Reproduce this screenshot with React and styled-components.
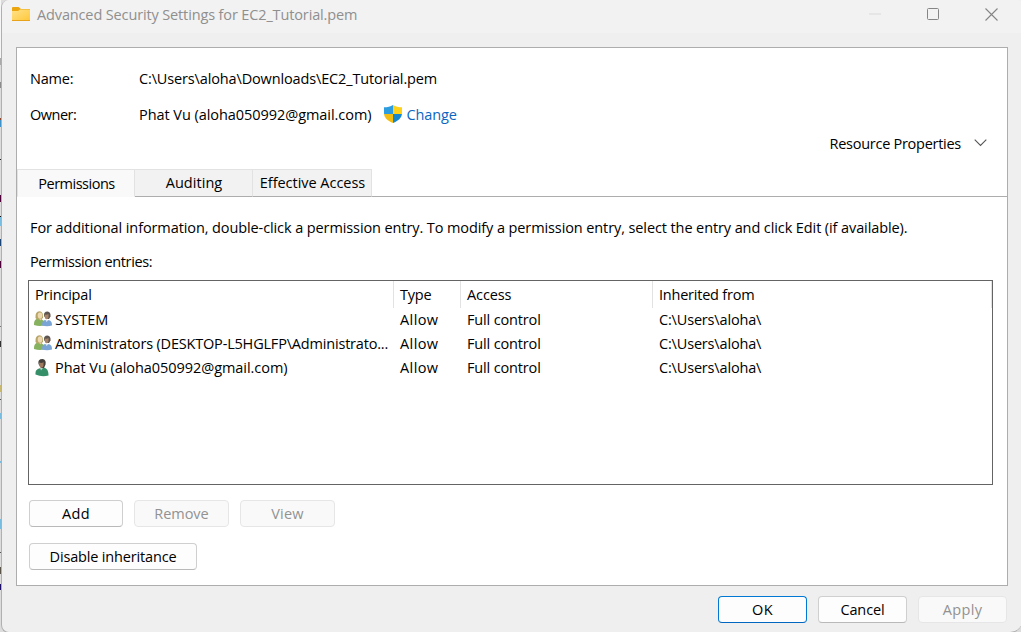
import React from "react";
import styled, { createGlobalStyle, css } from "styled-components";

const GlobalStyle = createGlobalStyle`
  * { box-sizing: border-box; }
  body {
    margin: 0;
    background: #d9d9d9;
    color: #000;
    font: 14.5px/20px "Open Sans", "Noto Sans", sans-serif;
  }
`;

const Desktop = styled.div`
  position: relative;
  height: 632px;
  overflow: hidden;
  background: #dcdcdc;
`;

const Sliver = styled.i`
  position: absolute;
  left: 0;
  width: ${(p) => p.$w || 1}px;
  top: ${(p) => p.$top}px;
  height: ${(p) => p.$h}px;
  background: ${(p) => p.$color};
`;

const Window = styled.div`
  position: relative;
  display: flex;
  flex-direction: column;
  width: 1021px;
  height: 633px;
  margin-left: 1px;
  border: 1px solid #b0b0b0;
  border-top: 0;
  border-right: 0;
  border-radius: 8px 3px 12px 8px;
  background: #efefef;
  overflow: hidden;
`;

const TitleBar = styled.header`
  display: flex;
  align-items: center;
  flex: none;
  height: 33px;
  padding: 0 24px 5px 10px;
  background: #f2f2f2;
  color: #8f8f8f;
`;

const Title = styled.span`
  margin-left: 6px;
  padding-top: 1px;
  flex: 1;
`;

const WindowControls = styled.div`
  display: flex;
  align-items: center;
  gap: 46px;
`;

const Label = styled.span`
  white-space: pre;
  letter-spacing: ${(p) => p.$ls || 0}px;
`;

const Panel = styled.main`
  display: flex;
  flex-direction: column;
  flex: none;
  width: 992px;
  height: 539px;
  margin: 14px 0 0 14px;
  border: 1px solid #adadad;
  background: #fff;
`;

const Details = styled.div`
  display: grid;
  grid-template-columns: 109px 1fr;
  row-gap: 16px;
  padding: 21px 0 0 13px;
`;

const OwnerCell = styled.div`
  display: flex;
  align-items: center;
`;

const ChangeLink = styled.a`
  display: flex;
  align-items: center;
  gap: 4px;
  margin-left: 13px;
  color: #0b66c3;
`;

const ResourceRow = styled.div`
  display: flex;
  justify-content: flex-end;
  align-items: center;
  gap: 13px;
  height: 20px;
  margin-top: 9px;
  padding-right: 20px;
`;

const Tabs = styled.nav`
  display: flex;
  height: 28px;
  margin-top: 15px;
`;

const Tab = styled.div`
  display: flex;
  justify-content: center;
  width: ${(p) => p.$w}px;
  padding: 3px 0 0 1px;
  border: 1px solid #e2e2e2;
  border-bottom-color: #adadad;
  border-left-width: 0;
  background: #f2f2f2;
  ${(p) =>
    p.$active &&
    css`
      padding-top: 4px;
      border-left-width: 1px;
      border-bottom-color: #f9f9f9;
      background: #f9f9f9;
    `}
`;

const TabRule = styled.div`
  flex: 1;
  border-bottom: 1px solid #adadad;
`;

const Note = styled.p`
  margin: ${(p) => p.$top}px 0 0 13px;
`;

const List = styled.section`
  flex: none;
  width: 965px;
  height: 205px;
  margin: 8px 0 0 11px;
  border: 1px solid #646464;
`;

const Row = styled.div`
  display: grid;
  grid-template-columns: 365px 67px 192px 339px;
  height: 24px;
  line-height: 24px;
`;

const HeaderRow = styled(Row)`
  height: 26px;
  line-height: 27px;
  margin-bottom: 1px;
`;

const Cell = styled.div`
  display: flex;
  align-items: center;
  padding-left: 6px;
`;

const HeaderCell = styled(Cell)`
  border-right: 1px solid #e2e2e2;
`;

const PrincipalCell = styled(Cell)`
  gap: 3px;
  padding-left: 5px;
`;

const ButtonRow = styled.div`
  display: flex;
  gap: 11px;
  margin: ${(p) => p.$top}px 0 0 12px;
`;

const Footer = styled.footer`
  display: flex;
  justify-content: flex-end;
  gap: 11px;
  padding: 10px 15px 0 0;
`;

const Button = styled.button`
  display: flex;
  align-items: center;
  justify-content: center;
  flex: none;
  width: ${(p) => p.$w}px;
  height: 27px;
  padding: 1px 0 0;
  border: 1px solid ${(p) => (p.$primary ? "#0078d4" : "#cfcfcf")};
  border-bottom-color: ${(p) => (p.$primary ? "#0067c0" : "#b9b9b9")};
  border-radius: 4px;
  background: #fdfdfd;
  color: #000;
  font: inherit;
  &:disabled {
    border-color: #e6e6e6;
    background: #f9f9f9;
    color: #929292;
  }
`;

const Icon = styled.svg`
  display: block;
  flex: none;
`;

const FolderIcon = () => (
  <Icon width="19" height="16" viewBox="0 0 19 16">
    <defs>
      <linearGradient id="folder" x2="1" y2="1">
        <stop stopColor="#ffe28a" />
        <stop offset="1" stopColor="#ffc83a" />
      </linearGradient>
    </defs>
    <path d="M0 2q0-1 1-1h5.5L9 3h9v11H0z" fill="#eba50f" />
    <path d="M0 5h6l2-1.500h10V14.500H0z" fill="url(#folder)" />
    <path d="M0 14h18v1H0z" fill="#e9a31a" />
  </Icon>
);

const ShieldIcon = () => (
  <Icon width="18" height="20" viewBox="0 0 18 20">
    <defs>
      <clipPath id="shield">
        <path d="M9 0C6.500 1.600 3.500 2.300 0 2.300V8c0 5 4 8 9 10 5-2 9-5 9-10V2.300C14.500 2.300 11.500 1.600 9 0z" />
      </clipPath>
    </defs>
    <g clipPath="url(#shield)">
      <path d="M0 0h9v9H0z" fill="#2d9de0" />
      <path d="M9 0h9v9H9z" fill="#ffd21a" />
      <path d="M0 9h9v9H0z" fill="#f4bd12" />
      <path d="M9 9h9v9H9z" fill="#1687cf" />
    </g>
  </Icon>
);

const GroupIcon = () => (
  <Icon width="18" height="18" viewBox="0 0 18 18">
    <path d="M0 14c0-4 1-6 4-6.500h3l3 3v4q-5 1-10-.5z" fill="#86b15e" />
    <path d="M1.500 7Q1 .5 5.500.3 9.500.5 9 7l-2 1.500H3z" fill="#b9a566" />
    <ellipse cx="6" cy="4.500" rx="2.300" ry="3" fill="#ecd9b4" />
    <path d="M4.500 7.500h3L7 9.500z" fill="#e5cfa5" />
    <path d="M8 14.500c0-4 1-5 3-5.500h3c3 .5 4 2 4 5.500q-5 1.500-10 0z" fill="#7ba4d6" />
    <path d="M10 5Q9.500.5 13.500.5 17 1 16.500 5.500L15 8h-3z" fill="#5d5650" />
    <path d="M10.500 3.500Q13 4 14.500 3v3.500Q13.500 8.700 12 8.300 10.500 7 10.500 3.500z" fill="#a98468" />
    <path d="M11.500 9h3L12.500 11z" fill="#d9e7f5" />
  </Icon>
);

const PersonIcon = () => (
  <Icon width="18" height="18" viewBox="0 0 18 18">
    <path d="M1.500 15.500Q1 10.500 5 9.500L9 8.500c4 .5 5.500 3 5.500 8Q8 18.500 1.500 15.500z" fill="#35906a" />
    <path d="M4.500 5Q3.500 0 8.500 0 12.500.5 11.500 5.500L10 9H7z" fill="#45403b" />
    <path d="M5 3.500Q8 4.500 9.500 3v4Q8.500 9.500 6.500 8.500 5 7 5 3.500z" fill="#a07a5e" />
    <path d="M6 9h3L7 11.500z" fill="#b9d6c6" />
  </Icon>
);

const entries = [
  { icon: <GroupIcon />, name: "SYSTEM", ls: 0.05 },
  {
    icon: <GroupIcon />,
    name: "Administrators (DESKTOP-L5HGLFP\\Administrato...",
    ls: -0.185,
  },
  { icon: <PersonIcon />, name: "Phat Vu (aloha050992@gmail.com)", ls: -0.055 },
];

export default function App() {
  return (
    <Desktop>
      <GlobalStyle />
      <Sliver $top={0} $h={58} $color="#f6f6f6" />
      <Sliver $top={58} $h={7} $w={2} $color="#aaaaaa" />
      <Sliver $top={82} $h={6} $w={2} $color="#8c8c8c" />
      <Sliver $top={118} $h={2} $w={2} $color="#8a4b32" />
      <Sliver $top={120} $h={7} $w={2} $color="#3e91c9" />
      <Sliver $top={159} $h={1} $w={2} $color="#222222" />
      <Sliver $top={195} $h={7} $color="#4b0038" />
      <Sliver $top={216} $h={1} $w={2} $color="#111111" />
      <Sliver $top={217} $h={9} $color="#79bde0" />
      <Sliver $top={239} $h={7} $color="#1c4474" />
      <Sliver $top={261} $h={7} $color="#4b0038" />
      <Sliver $top={326} $h={1} $w={2} $color="#777777" />
      <Sliver $top={341} $h={6} $color="#333333" />
      <Sliver $top={385} $h={7} $color="#c8b870" />
      <Sliver $top={399} $h={1} $w={2} $color="#555555" />
      <Sliver $top={413} $h={6} $color="#79bde0" />
      <Sliver $top={461} $h={2} $color="#79bde0" />
      <Sliver $top={519} $h={10} $color="#79bde0" />
      <Sliver $top={552} $h={1} $w={2} $color="#555555" />
      <Sliver $top={567} $h={7} $color="#5a5448" />
      <Sliver $top={584} $h={6} $color="#1a0d63" />
      <Window>
        <TitleBar>
          <FolderIcon />
          <Title>
            <Label $ls={-0.135}>Advanced Security Settings for EC2_Tutorial.pem</Label>
          </Title>
          <WindowControls>
            <Icon width="12" height="13" viewBox="0 0 12 13">
              <path d="M0 6h12" stroke="#dadada" />
            </Icon>
            <Icon width="12" height="12" viewBox="0 0 12 12" fill="none">
              <rect x=".5" y=".5" width="11" height="11" rx="1" stroke="#858585" />
            </Icon>
            <Icon width="13" height="13" viewBox="0 0 13 13">
              <path d="M.5.5l12 12M12.500.5l-12 12" stroke="#858585" strokeWidth="1.100" />
            </Icon>
          </WindowControls>
        </TitleBar>
        <Panel>
          <Details>
            <Label $ls={-0.2}>Name:</Label>
            <Label $ls={-0.14}>{"C:\\Users\\aloha\\Downloads\\EC2_Tutorial.pem"}</Label>
            <Label $ls={-0.5}>Owner:</Label>
            <OwnerCell>
              <Label $ls={-0.055}>Phat Vu (aloha050992@gmail.com)</Label>
              <ChangeLink>
                <ShieldIcon />
                <Label $ls={-0.1}>Change</Label>
              </ChangeLink>
            </OwnerCell>
          </Details>
          <ResourceRow>
            <Label $ls={-0.27}>Resource Properties</Label>
            <Icon width="13" height="10" viewBox="0 0 13 10" fill="none">
              <path d="M.7.7l5.800 5.800L12.300.7" stroke="#555" strokeWidth="1.100" />
            </Icon>
          </ResourceRow>
          <Tabs>
            <Tab $w={118} $active>
              <Label $ls={-0.5}>Permissions</Label>
            </Tab>
            <Tab $w={118}>
              <Label $ls={0.05}>Auditing</Label>
            </Tab>
            <Tab $w={119}>
              <Label $ls={-0.03}>Effective Access</Label>
            </Tab>
            <TabRule />
          </Tabs>
          <Note $top={21}>
            <Label $ls={-0.1}>
              For additional information, double-click a permission entry. To modify a permission
              entry, select the entry and click Edit (if available).
            </Label>
          </Note>
          <Note $top={14}>
            <Label $ls={-0.38}>Permission entries:</Label>
          </Note>
          <List>
            <HeaderRow>
              <HeaderCell><Label $ls={-0.2}>Principal</Label></HeaderCell>
              <HeaderCell><Label $ls={-0.2}>Type</Label></HeaderCell>
              <HeaderCell><Label $ls={-0.1}>Access</Label></HeaderCell>
              <HeaderCell><Label $ls={-0.22}>Inherited from</Label></HeaderCell>
            </HeaderRow>
            {entries.map((e) => (
              <Row key={e.name}>
                <PrincipalCell>
                  {e.icon}
                  <Label $ls={e.ls}>{e.name}</Label>
                </PrincipalCell>
                <Cell><Label $ls={0.4}>Allow</Label></Cell>
                <Cell><Label $ls={-0.15}>Full control</Label></Cell>
                <Cell><Label $ls={-0.17}>{"C:\\Users\\aloha\\"}</Label></Cell>
              </Row>
            ))}
          </List>
          <ButtonRow $top={15}>
            <Button $w={94}><Label $ls={0.3}>Add</Label></Button>
            <Button $w={95} disabled><Label $ls={-0.05}>Remove</Label></Button>
            <Button $w={95} disabled><Label $ls={0.2}>View</Label></Button>
          </ButtonRow>
          <ButtonRow $top={16}>
            <Button $w={168}><Label $ls={-0.16}>Disable inheritance</Label></Button>
          </ButtonRow>
        </Panel>
        <Footer>
          <Button $w={89} $primary><Label $ls={0.4}>OK</Label></Button>
          <Button $w={89}><Label $ls={-0.1}>Cancel</Label></Button>
          <Button $w={89} disabled><Label $ls={0.35}>Apply</Label></Button>
        </Footer>
      </Window>
    </Desktop>
  );
}
